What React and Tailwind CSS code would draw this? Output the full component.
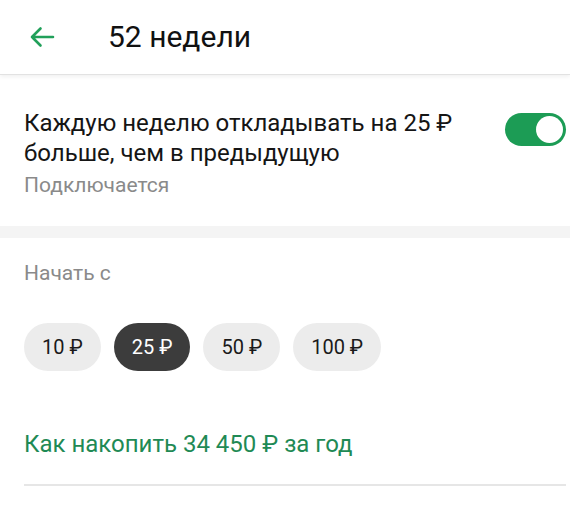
import { useState } from "react";

const amounts = [10, 25, 50, 100];

const App = () => {
  const [enabled, setEnabled] = useState(true);
  const [start, setStart] = useState(25);

  return (
    <div className="min-h-[507px] w-[570px] bg-white font-['Roboto','Noto_Sans',sans-serif] text-[#1a1a1a]">
      {/* Top bar */}
      <div className="flex h-[75px] items-center border-b border-[#e2e2e2] shadow-[0_2px_4px_rgba(0,0,0,0.06)]">
        <button className="ml-[29px] flex h-[26px] w-[26px] items-center justify-center text-[#21a05a]">
          <svg width="26" height="22" viewBox="0 0 26 22" fill="none">
            <path
              d="M24 11H3M11.5 2.5L3 11l8.5 8.5"
              stroke="currentColor"
              strokeWidth="2.6"
              strokeLinecap="round"
              strokeLinejoin="round"
            />
          </svg>
        </button>
        <h1 className="ml-[53px] text-[30px] leading-[32px] text-[#111]">52 недели</h1>
      </div>

      {/* Toggle row */}
      <div className="flex items-start justify-between pl-6 pr-1 pt-[33px] pb-[29px]">
        <div className="w-[460px]">
          <p className="text-[24px] leading-[30px] text-[#151515]">
            Каждую неделю откладывать на 25 ₽ больше, чем в предыдущую
          </p>
          <p className="mt-[5px] text-[21px] leading-[24px] text-[#8a8a8a]">Подключается</p>
        </div>
        <button
          onClick={() => setEnabled(!enabled)}
          className={`mt-[5px] flex h-[33px] w-[61px] items-center rounded-full p-[3px] ${
            enabled ? "justify-end bg-[#1c9c55]" : "justify-start bg-[#c8c8c8]"
          }`}
        >
          <span className="h-[27px] w-[27px] rounded-full bg-white" />
        </button>
      </div>

      <div className="h-[12px] bg-[#f4f4f4]" />

      {/* Start amount */}
      <div className="pl-6 pr-1 pt-[23px]">
        <p className="text-[21px] leading-[24px] text-[#8a8a8a]">Начать с</p>
        <div className="mt-[38px] flex gap-[13px]">
          {amounts.map((a) => (
            <button
              key={a}
              onClick={() => setStart(a)}
              className={`h-[48px] rounded-full px-[18px] text-[20px] leading-[48px] ${
                start === a ? "bg-[#3c3c3c] text-white" : "bg-[#ececec] text-[#1a1a1a]"
              }`}
            >
              {a} ₽
            </button>
          ))}
        </div>

        <a className="mt-[58px] block text-[24px] leading-[30px] text-[#1f8a55]">
          Как накопить 34 450 ₽ за год
        </a>
        <div className="mt-[25px] h-[2px] bg-[#e6e6e6]" />
      </div>
    </div>
  );
};

export default App;
